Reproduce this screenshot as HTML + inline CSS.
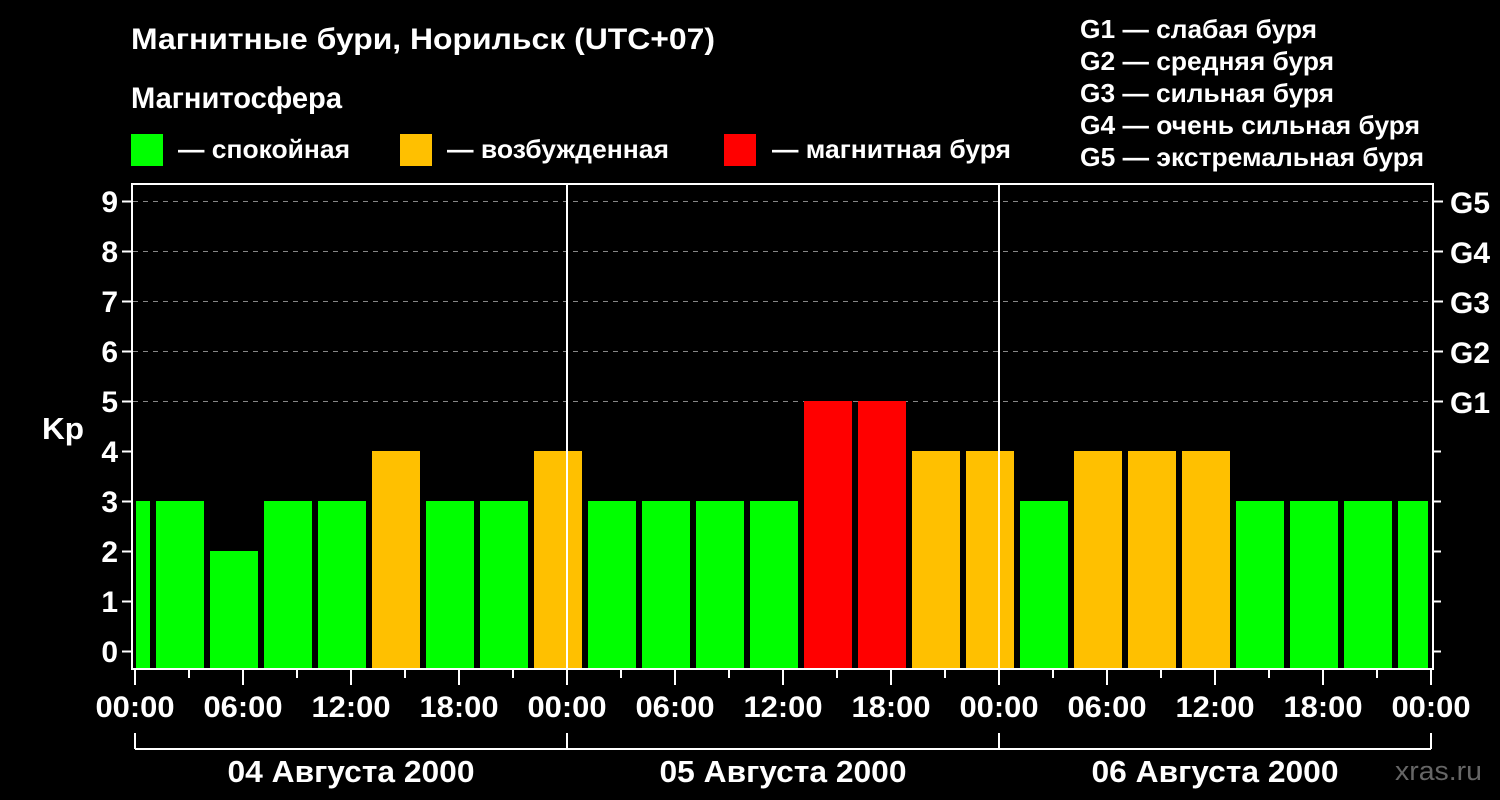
<!DOCTYPE html>
<html><head><meta charset="utf-8"><style>html,body{margin:0;padding:0;background:#000}svg{display:block}text{font-family:"Liberation Sans",sans-serif;font-weight:bold;fill:#fff}</style></head><body>
<svg width="1500" height="800" xmlns="http://www.w3.org/2000/svg">
<rect width="1500" height="800" fill="#000"/>
<text x="131" y="49" font-size="30" textLength="584" lengthAdjust="spacingAndGlyphs">Магнитные бури, Норильск (UTC+07)</text>
<text x="131" y="108" font-size="30" textLength="211" lengthAdjust="spacingAndGlyphs">Магнитосфера</text>
<rect x="131" y="134" width="32" height="32" fill="#00ff00"/>
<text x="178" y="158" font-size="26" textLength="172" lengthAdjust="spacingAndGlyphs">— спокойная</text>
<rect x="400" y="134" width="32" height="32" fill="#ffc000"/>
<text x="447" y="158" font-size="26" textLength="222" lengthAdjust="spacingAndGlyphs">— возбужденная</text>
<rect x="724" y="134" width="32" height="32" fill="#ff0000"/>
<text x="772" y="158" font-size="26" textLength="239" lengthAdjust="spacingAndGlyphs">— магнитная буря</text>
<g font-size="26">
<text x="1080" y="38" textLength="237" lengthAdjust="spacingAndGlyphs">G1 — слабая буря</text>
<text x="1080" y="70" textLength="254" lengthAdjust="spacingAndGlyphs">G2 — средняя буря</text>
<text x="1080" y="102" textLength="254" lengthAdjust="spacingAndGlyphs">G3 — сильная буря</text>
<text x="1080" y="134" textLength="340" lengthAdjust="spacingAndGlyphs">G4 — очень сильная буря</text>
<text x="1080" y="166" textLength="344" lengthAdjust="spacingAndGlyphs">G5 — экстремальная буря</text>
</g>
<g stroke="#888" stroke-width="1" stroke-dasharray="5,5">
<line x1="133" y1="201.5" x2="1432" y2="201.5"/>
<line x1="133" y1="251.5" x2="1432" y2="251.5"/>
<line x1="133" y1="301.5" x2="1432" y2="301.5"/>
<line x1="133" y1="351.5" x2="1432" y2="351.5"/>
<line x1="133" y1="401.5" x2="1432" y2="401.5"/>
</g>
<rect x="136" y="501" width="14" height="167" fill="#00ff00"/>
<g>
<rect x="156" y="501" width="48" height="167" fill="#00ff00"/>
<rect x="210" y="551" width="48" height="117" fill="#00ff00"/>
<rect x="264" y="501" width="48" height="167" fill="#00ff00"/>
<rect x="318" y="501" width="48" height="167" fill="#00ff00"/>
<rect x="372" y="451" width="48" height="217" fill="#ffc000"/>
<rect x="426" y="501" width="48" height="167" fill="#00ff00"/>
<rect x="480" y="501" width="48" height="167" fill="#00ff00"/>
<rect x="534" y="451" width="48" height="217" fill="#ffc000"/>
<rect x="588" y="501" width="48" height="167" fill="#00ff00"/>
<rect x="642" y="501" width="48" height="167" fill="#00ff00"/>
<rect x="696" y="501" width="48" height="167" fill="#00ff00"/>
<rect x="750" y="501" width="48" height="167" fill="#00ff00"/>
<rect x="804" y="401" width="48" height="267" fill="#ff0000"/>
<rect x="858" y="401" width="48" height="267" fill="#ff0000"/>
<rect x="912" y="451" width="48" height="217" fill="#ffc000"/>
<rect x="966" y="451" width="48" height="217" fill="#ffc000"/>
<rect x="1020" y="501" width="48" height="167" fill="#00ff00"/>
<rect x="1074" y="451" width="48" height="217" fill="#ffc000"/>
<rect x="1128" y="451" width="48" height="217" fill="#ffc000"/>
<rect x="1182" y="451" width="48" height="217" fill="#ffc000"/>
<rect x="1236" y="501" width="48" height="167" fill="#00ff00"/>
<rect x="1290" y="501" width="48" height="167" fill="#00ff00"/>
<rect x="1344" y="501" width="48" height="167" fill="#00ff00"/>
<rect x="1398" y="501" width="30" height="167" fill="#00ff00"/>
</g>
<g stroke="#fff" stroke-width="2" fill="none">
<polyline points="132,668 132,184 1433,184 1433,668"/>
<line x1="131" y1="669" x2="1434" y2="669"/>
<line x1="567" y1="183" x2="567" y2="668"/>
<line x1="999" y1="183" x2="999" y2="668"/>
<path d="M122 201.5h10M122 251.5h10M122 301.5h10M122 351.5h10M122 401.5h10M122 451.5h10M122 501.5h10M122 551.5h10M122 601.5h10M122 651.5h10"/>
<path d="M1433 201.5h10M1433 251.5h10M1433 301.5h10M1433 351.5h10M1433 401.5h10M1433 451.5h8M1433 501.5h8M1433 551.5h8M1433 601.5h8M1433 651.5h8"/>
<path d="M135 670v15M189 670v8M243 670v15M297 670v8M351 670v15M405 670v8M459 670v15M513 670v8M567 670v15M621 670v8M675 670v15M729 670v8M783 670v15M837 670v8M891 670v15M945 670v8M999 670v15M1053 670v8M1107 670v15M1161 670v8M1215 670v15M1269 670v8M1323 670v15M1377 670v8M1431 670v15"/>
<path d="M135 733v16M567 733v16M999 733v16M1431 733v16M135 749H1431"/>
</g>
<g font-size="30" text-anchor="end">
<text x="118" y="212">9</text><text x="118" y="262">8</text><text x="118" y="312">7</text><text x="118" y="362">6</text><text x="118" y="412">5</text><text x="118" y="462">4</text><text x="118" y="512">3</text><text x="118" y="562">2</text><text x="118" y="612">1</text><text x="118" y="662">0</text>
</g>
<text x="42" y="439" font-size="31" textLength="42" lengthAdjust="spacingAndGlyphs">Kp</text>
<g font-size="30">
<text x="1450" y="213" textLength="40" lengthAdjust="spacingAndGlyphs">G5</text><text x="1450" y="263" textLength="40" lengthAdjust="spacingAndGlyphs">G4</text><text x="1450" y="313" textLength="40" lengthAdjust="spacingAndGlyphs">G3</text><text x="1450" y="363" textLength="40" lengthAdjust="spacingAndGlyphs">G2</text><text x="1450" y="413" textLength="40" lengthAdjust="spacingAndGlyphs">G1</text>
</g>
<g font-size="30" text-anchor="middle">
<text x="135" y="717" textLength="79" lengthAdjust="spacingAndGlyphs">00:00</text><text x="243" y="717" textLength="79" lengthAdjust="spacingAndGlyphs">06:00</text><text x="351" y="717" textLength="79" lengthAdjust="spacingAndGlyphs">12:00</text><text x="459" y="717" textLength="79" lengthAdjust="spacingAndGlyphs">18:00</text>
<text x="567" y="717" textLength="79" lengthAdjust="spacingAndGlyphs">00:00</text><text x="675" y="717" textLength="79" lengthAdjust="spacingAndGlyphs">06:00</text><text x="783" y="717" textLength="79" lengthAdjust="spacingAndGlyphs">12:00</text><text x="891" y="717" textLength="79" lengthAdjust="spacingAndGlyphs">18:00</text>
<text x="999" y="717" textLength="79" lengthAdjust="spacingAndGlyphs">00:00</text><text x="1107" y="717" textLength="79" lengthAdjust="spacingAndGlyphs">06:00</text><text x="1215" y="717" textLength="79" lengthAdjust="spacingAndGlyphs">12:00</text><text x="1323" y="717" textLength="79" lengthAdjust="spacingAndGlyphs">18:00</text>
<text x="1431" y="717" textLength="79" lengthAdjust="spacingAndGlyphs">00:00</text>
</g>
<g font-size="31" text-anchor="middle">
<text x="351" y="782" textLength="247" lengthAdjust="spacingAndGlyphs">04 Августа 2000</text>
<text x="783" y="782" textLength="247" lengthAdjust="spacingAndGlyphs">05 Августа 2000</text>
<text x="1215" y="782" textLength="247" lengthAdjust="spacingAndGlyphs">06 Августа 2000</text>
</g>
<text x="1395" y="780" font-size="27" textLength="87" lengthAdjust="spacingAndGlyphs" style="fill:#666;font-weight:normal">xras.ru</text>
</svg>
</body></html>
